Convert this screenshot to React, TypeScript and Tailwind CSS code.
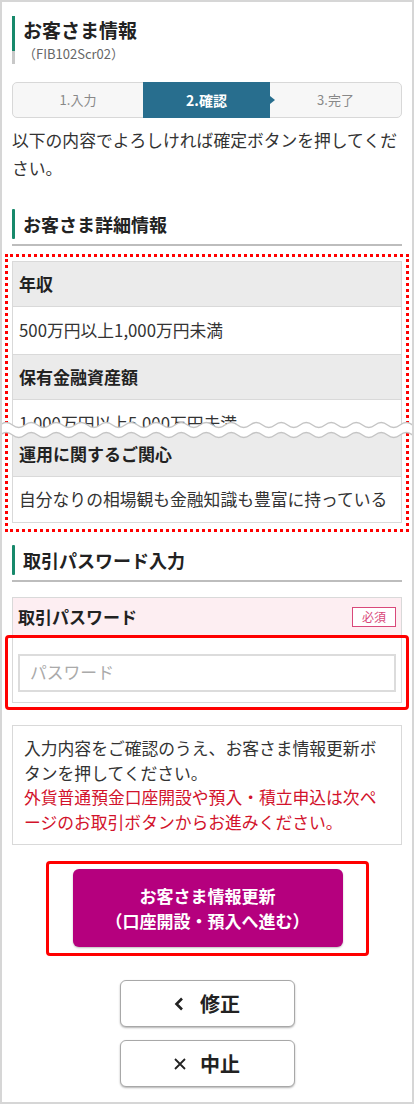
import React from "react";

function Heading({ children }: { children: React.ReactNode }) {
  return (
    <div>
      <div className="flex h-[30px] items-stretch">
        <div className="w-[3px] rounded-[1px] bg-[#17896b]" />
        <div className="pl-[8px] text-[18px] font-bold leading-[30px] text-[#222]">{children}</div>
      </div>
      <div className="mt-[5px] h-[2px] bg-[#bdbdbd]" />
    </div>
  );
}

function HeadRow({ children, h }: { children: React.ReactNode; h: string }) {
  return (
    <div className={`flex items-center border-b border-[#d9d9d9] bg-[#ebebeb] px-[6px] text-[17px] font-bold text-[#222] ${h}`}>
      {children}
    </div>
  );
}

function wavePath(y: number, reverse: boolean) {
  const step = 12.5;
  const xs: number[] = [];
  for (let x = -25; x <= 450; x += step) xs.push(x);
  let d = "";
  if (!reverse) {
    d += `M${xs[0]} ${y} `;
    for (let i = 0; i < xs.length - 1; i++) {
      const cy = y + (i % 2 === 0 ? -5 : 5);
      d += `Q${xs[i] + step / 2} ${cy} ${xs[i + 1]} ${y} `;
    }
  } else {
    d += `L${xs[xs.length - 1]} ${y} `;
    for (let i = xs.length - 2; i >= 0; i--) {
      const cy = y + (i % 2 === 0 ? -5 : 5);
      d += `Q${xs[i] + step / 2} ${cy} ${xs[i]} ${y} `;
    }
  }
  return d;
}

function Wave() {
  const top = wavePath(11, false);
  const bottom = wavePath(21, false);
  const fill = top + wavePath(21, true) + "Z";
  return (
    <svg
      className="pointer-events-none absolute left-[-2px] top-[412px] z-10"
      width="414"
      height="28"
      viewBox="0 0 414 28"
    >
      <path d={fill} fill="#ffffff" />
      <path d={top} fill="none" stroke="#c4c4c4" strokeWidth="1.3" />
      <path d={bottom} fill="none" stroke="#c4c4c4" strokeWidth="1.3" />
    </svg>
  );
}

export default function App() {
  return (
    <div className="relative h-[1104px] w-[414px] overflow-hidden border-2 border-[#d6d6d6] bg-white px-[10px] font-['Noto_Sans_CJK_JP',sans-serif] text-[#333]">
      {/* Title */}
      <div className="flex pt-[14px]">
        <div className="flex w-[3px] flex-col">
          <div className="h-[35px] bg-[#17896b]" />
          <div className="h-[13px] bg-[#c8c8c8]" />
        </div>
        <div className="pl-[8px]">
          <div className="h-[28px] text-[19px] font-bold leading-[28px] text-[#222]">お客さま情報</div>
          <div className="h-[20px] text-[13px] leading-[20px] text-[#666]">（FIB102Scr02）</div>
        </div>
      </div>

      {/* Stepper */}
      <div className="mt-[18px] flex h-[36px] rounded-[5px] border border-[#d8d8d8] bg-[#f7f7f7] text-[13px]">
        <div className="flex w-[130px] items-center justify-center text-[#888]">1.入力</div>
        <div className="relative -my-px flex w-[127px] items-center justify-center bg-[#286e8e] text-[14px] font-bold text-white">
          2.確認
          <div className="absolute right-[-5px] top-[14px] h-0 w-0 border-y-[4px] border-l-[5px] border-y-transparent border-l-[#286e8e]" />
        </div>
        <div className="flex flex-1 items-center justify-center text-[#888]">3.完了</div>
      </div>

      {/* Intro */}
      <p className="mt-[8px] text-[16.8px] leading-[28px] text-[#333]">
        以下の内容でよろしければ確定ボタンを押してください。
      </p>

      {/* Section: details */}
      <div className="mt-[27px]">
        <Heading>お客さま詳細情報</Heading>
      </div>

      <div className="mx-[-7px] mt-[8px] border-[3px] border-dotted border-[#ff0000] px-[4px] pb-[6px] pt-[4px]">
        <div className="border border-[#d9d9d9] text-[16.8px]">
          <HeadRow h="h-[45px]">年収</HeadRow>
          <div className="flex h-[48px] items-center border-b border-[#d9d9d9] px-[6px]">500万円以上1,000万円未満</div>
          <HeadRow h="h-[45px]">保有金融資産額</HeadRow>
          <div className="h-[31px] overflow-hidden">
            <div className="flex h-[48px] items-center px-[6px]">1,000万円以上5,000万円未満</div>
          </div>
          <HeadRow h="h-[46px]">運用に関するご関心</HeadRow>
          <div className="flex h-[45px] items-center px-[6px]">自分なりの相場観も金融知識も豊富に持っている</div>
        </div>
      </div>

      <Wave />

      {/* Section: password */}
      <div className="mt-[13px]">
        <Heading>取引パスワード入力</Heading>
      </div>

      <div className="mt-[15px] border border-[#d9d9d9]">
        <div className="flex h-[39px] items-center justify-between border-b border-[#d9d9d9] bg-[#fdeef2] pl-[5px] pr-[5px]">
          <span className="text-[17px] font-bold text-[#222]">取引パスワード</span>
          <span className="flex h-[20px] items-center border border-[#d9487a] bg-white px-[9px] text-[12px] text-[#d9487a]">必須</span>
        </div>
        <div className="relative px-[5px] pb-[10px] pt-[17px]">
          <div className="flex h-[38px] items-center border-2 border-[#dcdcdc] px-[10px] text-[16.8px] text-[#aaa]">パスワード</div>
          <div className="pointer-events-none absolute bottom-[-8px] left-[-8px] right-[-8px] top-[-2px] rounded-[4px] border-[3px] border-[#ff0000]" />
        </div>
      </div>

      {/* Info box */}
      <div className="mt-[22px] border border-[#d9d9d9] px-[11px] pb-[10px] pt-[10px] text-[16.8px] leading-[24.5px]">
        <p className="text-[#333]">入力内容をご確認のうえ、お客さま情報更新ボタンを押してください。</p>
        <p className="text-[#d2122b]">外貨普通預金口座開設や預入・積立申込は次ページのお取引ボタンからお進みください。</p>
      </div>

      {/* Primary button */}
      <div className="mx-auto mt-[16px] w-[323px] rounded-[4px] border-[3px] border-[#ff0000] pb-[6px] pl-[24px] pr-[23px] pt-[5px]">
        <button className="flex h-[78px] w-full flex-col items-center justify-center rounded-[6px] bg-[#b5007e] text-[17px] font-bold leading-[25px] text-white shadow-[0_1px_2px_rgba(0,0,0,0.25)]">
          <span>お客さま情報更新</span>
          <span>（口座開設・預入へ進む）</span>
        </button>
      </div>

      {/* Secondary buttons */}
      <div className="mt-[24px] flex flex-col items-center gap-[13px]">
        <button className="flex h-[47px] w-[175px] items-center justify-center gap-[16px] rounded-[6px] border border-[#a8a8a8] bg-white text-[20px] font-bold text-[#222] shadow-[0_1px_2px_rgba(0,0,0,0.3)]">
          <svg width="10" height="14" viewBox="0 0 10 14">
            <polyline points="8,1.5 2.5,7 8,12.5" fill="none" stroke="#222" strokeWidth="2.6" strokeLinejoin="miter" />
          </svg>
          <span>修正</span>
        </button>
        <button className="flex h-[47px] w-[175px] items-center justify-center gap-[14px] rounded-[6px] border border-[#a8a8a8] bg-white text-[20px] font-bold text-[#222] shadow-[0_1px_2px_rgba(0,0,0,0.3)]">
          <svg width="12" height="12" viewBox="0 0 12 12">
            <path d="M1 1 L11 11 M11 1 L1 11" stroke="#222" strokeWidth="1.8" fill="none" />
          </svg>
          <span>中止</span>
        </button>
      </div>
    </div>
  );
}
